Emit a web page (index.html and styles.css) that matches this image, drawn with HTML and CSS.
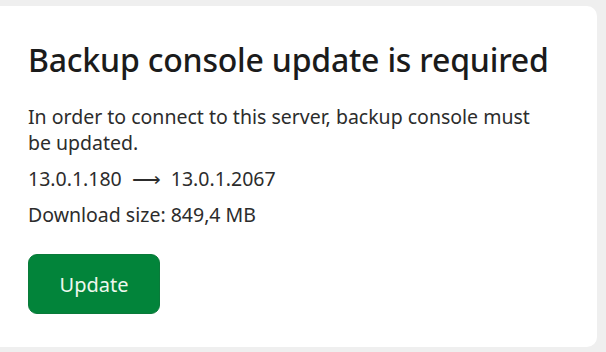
FILE: index.html
```html
<!DOCTYPE html>
<html lang="en">
  <head>
    <meta charset="UTF-8" />
    <meta name="viewport" content="width=device-width, initial-scale=1.0" />
    <title>Backup console update</title>
    <link rel="stylesheet" href="styles.css">
  </head>
  <body>
    <main class="update-card">
      <h1 class="update-title">Backup console update is required</h1>
      <p class="update-text">
        In order to connect to this server, backup console must be updated.
      </p>
      <p class="update-versions">
        <span>13.0.1.180</span>
        <span class="arrow">&#x27F6;</span>
        <span>13.0.1.2067</span>
      </p>
      <p class="update-size">Download size: 849,4 MB</p>
      <button class="update-btn">Update</button>
    </main>
  </body>
</html>
```

FILE: styles.css
```css
* {
  margin: 0;
  padding: 0;
  box-sizing: border-box;
  font-family: "Noto Sans", "Open Sans", sans-serif;
}

body {
  background-color: #efefef;
  height: 100vh;
  overflow: hidden;
  padding: 6px 9px 5px 0;
}

.update-card {
  height: 341px;
  margin-left: -10px;
  background-color: white;
  border-radius: 10px;
  padding: 34px 40px 0 38px;
  color: #1b1b1b;
}

.update-title {
  font-size: 32px;
  font-weight: 500;
  line-height: 40px;
  letter-spacing: -0.2px;
  margin-bottom: 24px;
}

.update-text,
.update-versions,
.update-size {
  font-size: 19.5px;
  line-height: 26px;
  color: #2c2c2c;
}

.update-text {
  max-width: 535px;
}

.update-versions {
  margin-top: 10px;
  display: flex;
  gap: 10px;
}

.update-size {
  margin-top: 10px;
}

.update-btn {
  display: block;
  margin-top: 26px;
  width: 132px;
  height: 60px;
  background-color: #02843a;
  color: #eef8ee;
  border: 1px solid #0a7a3a;
  border-radius: 9px;
  font-size: 20px;
  cursor: pointer;
}
```
